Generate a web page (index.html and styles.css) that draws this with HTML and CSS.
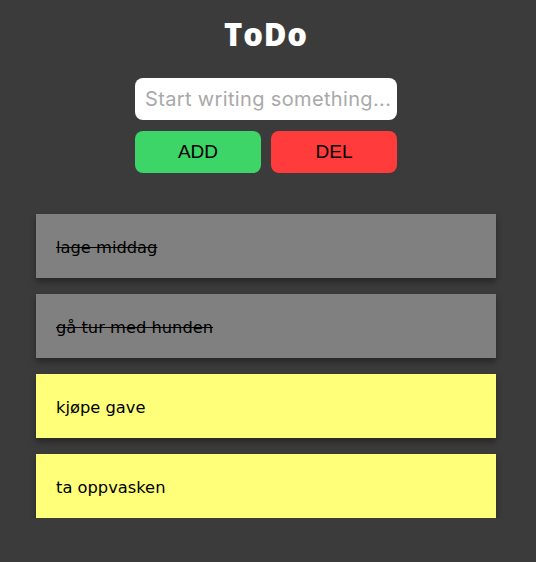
FILE: index.html
```html
<!DOCTYPE html>
<html lang="no">
<head>
<meta charset="utf-8">
<title>ToDo</title>
<link rel="stylesheet" href="styles.css">
</head>
<body>
<main class="app">
  <h1 class="title">ToDo</h1>
  <div class="controls">
    <input class="entry" type="text" placeholder="Start writing something...">
    <div class="buttons">
      <button class="btn btn-add">ADD</button>
      <button class="btn btn-del">DEL</button>
    </div>
  </div>
  <ul class="list">
    <li class="item done">lage middag</li>
    <li class="item done">gå tur med hunden</li>
    <li class="item">kjøpe gave</li>
    <li class="item">ta oppvasken</li>
  </ul>
</main>
</body>
</html>
```
FILE: styles.css
```css
html, body {
  margin: 0;
  padding: 0;
  background: #3b3b3b;
}
.app {
  display: flex;
  flex-direction: column;
  align-items: center;
  padding: 16px 4px 0 0;
  font-family: "DejaVu Sans", sans-serif;
}
.title {
  margin: 0;
  color: #fff;
  font-family: "Open Sans", sans-serif;
  font-weight: 800;
  font-size: 31px;
  letter-spacing: 0.8px;
  line-height: 36px;
}
.controls {
  margin-top: 26px;
  display: flex;
  flex-direction: column;
  gap: 11px;
  width: 262px;
}
.entry {
  box-sizing: border-box;
  width: 100%;
  height: 42px;
  border: none;
  border-radius: 8px;
  padding: 0 2px 0 10px;
  font-family: Inter, "Liberation Sans", sans-serif;
  font-size: 20px;
  letter-spacing: 0.35px;
  background: #fff;
  outline: none;
}
.entry::placeholder {
  color: #a9a9a9;
}
.buttons {
  display: flex;
  gap: 10px;
}
.btn {
  flex: 1;
  height: 42px;
  border: none;
  border-radius: 8px;
  font-family: "Liberation Sans", Arial, sans-serif;
  font-size: 19px;
  color: #000;
  padding: 0;
}
.btn-add { background: #3dd468; }
.btn-del { background: #ff3b3b; }
.list {
  list-style: none;
  margin: 41px 0 0;
  padding: 0;
  width: 460px;
  display: flex;
  flex-direction: column;
  gap: 16px;
}
.item {
  height: 64px;
  box-sizing: border-box;
  padding: 2px 20px 0;
  display: flex;
  align-items: center;
  background: #ffff7a;
  color: #000;
  font-family: "DejaVu Sans", sans-serif;
  font-size: 16.3px;
  box-shadow: 0 4px 6px rgba(0,0,0,0.35);
}
.item.done {
  background: #808080;
  text-decoration: line-through;
}
```
